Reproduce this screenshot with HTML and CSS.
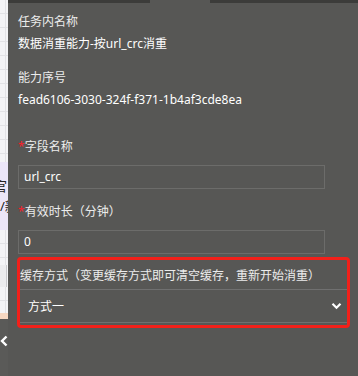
FILE: index.html
```html
<!DOCTYPE html>
<html>
	<head>
		<meta charset="utf-8">
		<meta name="viewport" content="width=device-width, initial-scale=1">
		<title>任务配置</title>
		<link rel="stylesheet" href="styles.css">
	</head>

	<body>
		<div class="page">
		<!--Страница под шторкой-->
			<div class="backdrop">
				<div class="bd-grid"></div>
				<div class="bd-tag">官<br>/新</div>
				<div class="bd-grid bd-mid"></div>
				<div class="bd-box"></div>
				<div class="bd-grid bd-low"></div>
				<div class="bd-peach"></div>
				<div class="bd-handle">
					<svg width="8" height="12" viewBox="0 0 8 12"><path d="M6.5 1.5 L2 6 L6.5 10.5" fill="none" stroke="#fff" stroke-width="2.4"/></svg>
				</div>
			</div>
		<!--Шторка с формой-->
			<div class="drawer">
				<div class="drawer-top"><span class="top-gap"></span></div>
				<div class="drawer-body">
					<div class="info">
						<div class="info-label">任务内名称</div>
						<div class="info-value">数据消重能力-按url_crc消重</div>
					</div>
					<div class="info">
						<div class="info-label">能力序号</div>
						<div class="info-value">fead6106-3030-324f-f371-1b4af3cde8ea</div>
					</div>

					<div class="field first">
						<div class="field-label"><span class="req">*</span>字段名称</div>
						<div class="input">url_crc</div>
					</div>
					<div class="field">
						<div class="field-label"><span class="req">*</span>有效时长（分钟）</div>
						<div class="input">0</div>
					</div>

					<div class="cache-box">
						<div class="cache-label">缓存方式（变更缓存方式即可清空缓存，重新开始消重）</div>
						<div class="select">
							<span>方式一</span>
							<svg width="11" height="8" viewBox="0 0 11 8"><path d="M1.5 1.8 L5.5 5.8 L9.5 1.8" fill="none" stroke="#fff" stroke-width="2.2"/></svg>
						</div>
					</div>
				</div>
			</div>
		</div>
	</body>
</html>
```

FILE: styles.css
```css
			body {
				margin: 0;
				background: #575755;
				font-family: "Noto Sans", "Noto Sans CJK SC", sans-serif;
				font-size: 12px;
			}
			.page {
				display: flex;
				width: 358px;
				height: 376px;
				overflow: hidden;
			}
		/* Страница под шторкой */
			.backdrop {
				width: 8px;
				display: flex;
				flex-direction: column;
				background: #f4f4f6;
			}
			.bd-grid {
				height: 162px;
				background:
					repeating-linear-gradient(to bottom, transparent 0 13px, #e3e3e6 13px 14px),
					linear-gradient(to right, transparent 5px, #e3e3e6 5px 6px, transparent 6px);
			}
			.bd-tag {
				height: 68px;
				background: #ece6f8;
				color: #222;
				font-size: 13px;
				line-height: 20px;
				padding-top: 14px;
				box-sizing: border-box;
				text-indent: -6px;
				overflow: hidden;
				white-space: nowrap;
			}
			.bd-mid {
				height: 35px;
			}
			.bd-box {
				height: 22px;
				background: #ececee;
				border-right: 1px solid #c9c9cc;
				margin-right: 1px;
			}
			.bd-low {
				height: 26px;
			}
			.bd-peach {
				height: 6px;
				background: #f6d7c1;
			}
			.bd-handle {
				flex: 1;
				background: #5a5a58;
				display: flex;
				align-items: flex-start;
				padding-top: 16px;
			}
		/* Шторка */
			.drawer {
				flex: 1;
				background: #575755;
				color: #ececec;
			}
			.drawer-top {
				height: 3px;
				background: #3c3c3a;
				padding-left: 142px;
			}
			.top-gap {
				display: block;
				width: 60px;
				height: 3px;
				background: #575755;
			}
			.drawer-body {
				padding: 8px 8px 0 10px;
			}
			.info + .info {
				margin-top: 12px;
			}
			.info-label, .info-value {
				line-height: 22px;
			}
			.info-value {
				color: #fff;
			}
		/* Поля формы */
			.field {
				margin-top: 12px;
			}
			.field.first {
				margin-top: 25px;
			}
			.field-label {
				line-height: 22px;
				margin-bottom: 7px;
			}
			.req {
				color: #f5222d;
			}
			.input {
				width: 307px;
				height: 24px;
				box-sizing: border-box;
				border: 1px solid #6c6c6a;
				padding: 0 5px;
				line-height: 22px;
				color: #fff;
			}
		/* Блок выделенный красной рамкой */
			.cache-box {
				margin: 3px 0 0 -1px;
				border: 3px solid #f2201a;
				border-radius: 4px;
				padding: 5px 0 2px 0;
			}
			.cache-label {
				line-height: 22px;
				margin-bottom: 2px;
				white-space: nowrap;
			}
			.select {
				height: 34px;
				box-sizing: border-box;
				border-top: 1px solid #707070;
				border-bottom: 1px solid #707070;
				padding: 0 5px 0 8px;
				display: flex;
				align-items: center;
				justify-content: space-between;
				color: #fff;
			}
```
